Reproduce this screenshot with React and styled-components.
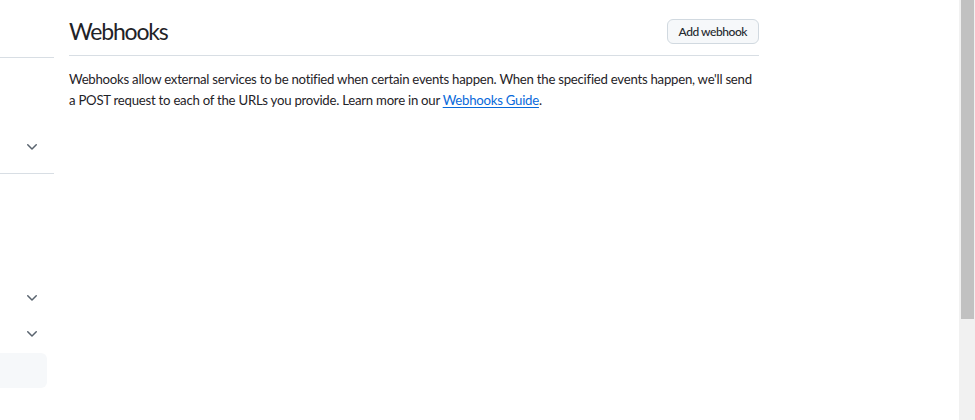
import { createGlobalStyle, styled } from "styled-components";

const GlobalStyle = createGlobalStyle`
  html, body {
    margin: 0;
    padding: 0;
    background: #ffffff;
    overflow: hidden;
  }
  body {
    font-family: Lato, "Noto Sans", "Liberation Sans", sans-serif;
    color: #1f2328;
  }
`;

const Chevron = () => (
  <svg width="16" height="16" viewBox="0 0 16 16" fill="#59636e" aria-hidden="true">
    <path d="M12.78 5.22a.749.749 0 0 1 0 1.06l-4.25 4.25a.749.749 0 0 1-1.06 0L3.22 6.28a.749.749 0 1 1 1.06-1.06L8 8.94l3.72-3.72a.749.749 0 0 1 1.06 0Z" />
  </svg>
);

export default function App() {
  return (
    <Page>
      <GlobalStyle />
      <Main>
        <Sidebar>
          <NavBlock $height={58} $border />
          <NavBlock $height={116} $border>
            <NavRow $height={32}>
              <Chevron />
            </NavRow>
            <Spacer $height={10} />
          </NavBlock>
          <NavBlock $height={106} />
          <NavRow $height={36}>
            <Chevron />
          </NavRow>
          <NavRow $height={36}>
            <Chevron />
          </NavRow>
          <Spacer $height={1} />
          <ActiveItem />
        </Sidebar>

        <Content>
          <Subhead>
            <Heading>Webhooks</Heading>
            <Button type="button">Add webhook</Button>
          </Subhead>
          <Description>
            Webhooks allow external services to be notified when certain events
            happen. When the specified events happen, we'll send a POST request
            to each of the URLs you provide. Learn more in our{" "}
            <Link href="#">Webhooks Guide</Link>.
          </Description>
        </Content>
      </Main>

      <ScrollTrack>
        <ScrollThumb />
      </ScrollTrack>
    </Page>
  );
}

const Page = styled.div`
  display: flex;
  width: 975px;
  height: 420px;
  overflow: hidden;
`;

const Main = styled.div`
  flex: 1;
  display: flex;
  gap: 15px;
  background: #ffffff;
`;

const Sidebar = styled.nav`
  width: 54px;
  flex-shrink: 0;
  display: flex;
  flex-direction: column;
`;

const NavBlock = styled.div`
  height: ${(p) => p.$height}px;
  box-sizing: border-box;
  flex-shrink: 0;
  display: flex;
  flex-direction: column;
  justify-content: flex-end;
  border-bottom: ${(p) => (p.$border ? "1px solid #d8dee4" : "none")};
`;

const NavRow = styled.div`
  height: ${(p) => p.$height}px;
  display: flex;
  align-items: center;
  padding-left: 24px;
  flex-shrink: 0;
`;

const Spacer = styled.div`
  height: ${(p) => p.$height}px;
  flex-shrink: 0;
`;

const ActiveItem = styled.div`
  width: 47px;
  height: 35px;
  border-radius: 0 6px 6px 0;
  background: #f6f8fa;
`;

const Content = styled.div`
  width: 690px;
  padding-top: 16px;
`;

const Subhead = styled.div`
  display: flex;
  align-items: center;
  justify-content: space-between;
  padding-bottom: 9px;
  border-bottom: 1px solid #d8dee4;
  margin-bottom: 13px;
`;

const Heading = styled.h2`
  margin: 0;
  font-size: 23px;
  line-height: 30px;
  font-weight: 400;
  letter-spacing: -1.2px;
  color: #1f2328;
`;

const Button = styled.button`
  height: 25px;
  padding: 0 11px;
  font-family: inherit;
  font-size: 12px;
  font-weight: 500;
  letter-spacing: -0.45px;
  color: #25292e;
  background: #f6f8fa;
  border: 1px solid #d1d9e0;
  border-radius: 6px;
  cursor: pointer;
`;

const Description = styled.p`
  margin: 0;
  max-width: 686px;
  font-size: 13.2px;
  line-height: 21px;
  letter-spacing: -0.25px;
  color: #1f2328;
`;

const Link = styled.a`
  color: #0969da;
  text-decoration: underline;
  text-underline-offset: 2px;
`;

const ScrollTrack = styled.div`
  width: 16px;
  flex-shrink: 0;
  background: #f1f1f1;
  padding: 0 1px 0 2px;
  box-sizing: border-box;
`;

const ScrollThumb = styled.div`
  height: 319px;
  background: #c1c1c1;
`;
